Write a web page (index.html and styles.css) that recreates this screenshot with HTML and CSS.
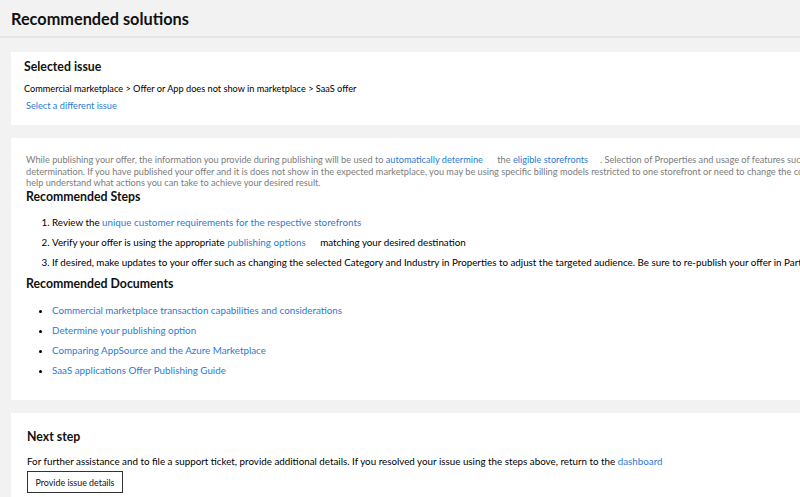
FILE: index.html
```html
<!DOCTYPE html>
<html>
<head>
<meta charset="utf-8">
<link rel="stylesheet" href="styles.css">
</head>
<body>
<div class="page">
  <header class="topbar">
    <h1 class="title">Recommended solutions</h1>
  </header>
  <main class="content">
    <section class="card card-issue">
      <h2 class="card-heading">Selected issue</h2>
      <div class="crumbs">Commercial marketplace &gt; Offer or App does not show in marketplace &gt; SaaS offer</div>
      <a class="link change-link" href="#">Select a different issue</a>
    </section>

    <section class="card card-steps">
      <p class="intro">While publishing your offer, the information you provide during publishing will be used to <a class="link" href="#">automatically determine</a><span class="ext"></span> the <a class="link" href="#">eligible storefronts</a><span class="ext"></span>. Selection of Properties and usage of features such as Test Drive can influence this storefront<br>determination. If you have published your offer and it is does not show in the expected marketplace, you may be using specific billing models restricted to one storefront or need to change the configuration of your offer. The steps below can<br>help understand what actions you can take to achieve your desired result.</p>
      <h2 class="section-heading">Recommended Steps</h2>
      <ol class="steps">
        <li>Review the <a class="link" href="#">unique customer requirements for the respective storefronts</a></li>
        <li>Verify your offer is using the appropriate <a class="link" href="#">publishing options</a><span class="ext"></span> matching your desired destination</li>
        <li>If desired, make updates to your offer such as changing the selected Category and Industry in Properties to adjust the targeted audience. Be sure to re-publish your offer in Partner Center.</li>
      </ol>
      <h2 class="section-heading">Recommended Documents</h2>
      <ul class="docs">
        <li><a class="link" href="#">Commercial marketplace transaction capabilities and considerations</a></li>
        <li><a class="link" href="#">Determine your publishing option</a></li>
        <li><a class="link" href="#">Comparing AppSource and the Azure Marketplace</a></li>
        <li><a class="link" href="#">SaaS applications Offer Publishing Guide</a></li>
      </ul>
    </section>

    <section class="card card-next">
      <h2 class="card-heading">Next step</h2>
      <p class="next-text">For further assistance and to file a support ticket, provide additional details. If you resolved your issue using the steps above, return to the <a class="link" href="#">dashboard</a></p>
      <button class="btn" type="button">Provide issue details</button>
    </section>
  </main>
</div>
</body>
</html>
```

FILE: styles.css
```css
html, body {
  margin: 0;
  padding: 0;
}
body {
  background: #f2f2f2;
  font-family: Lato, "Liberation Sans", Arial, sans-serif;
  color: #111;
  overflow: hidden;
  width: 800px;
  height: 497px;
}
.page {
  width: 1200px;
}
.topbar {
  height: 36px;
  border-bottom: 2px solid #e5e5e5;
  padding-left: 11px;
  display: flex;
  align-items: center;
}
.title {
  margin: 0;
  font-size: 16.3px;
  font-weight: 700;
  color: #111;
}
.content {
  padding: 14px 0 0 11px;
  display: flex;
  flex-direction: column;
  gap: 13px;
}
.card {
  background: #fff;
  width: 1100px;
  box-sizing: border-box;
}
.card-issue {
  height: 73px;
  padding: 7px 13px 0;
}
.card-heading {
  margin: 0;
  font-size: 12.3px;
  line-height: 16px;
  font-weight: 700;
  color: #111;
}
.crumbs {
  margin-top: 7px;
  font-size: 9.2px;
  line-height: 14px;
  color: #000;
}
.link {
  color: #2b7bd4;
  text-decoration: none;
}
.change-link {
  display: block;
  width: max-content;
  margin: 3px 0 0 2px;
  font-size: 9.2px;
  line-height: 14px;
}
.card-steps {
  height: 262px;
  padding: 16px 15px 0;
}
.intro {
  margin: 0;
  font-size: 9.2px;
  line-height: 11.5px;
  color: #7c7c7c;
  white-space: nowrap;
}
.ext {
  display: inline-block;
  width: 12px;
}
.section-heading {
  margin: 0;
  font-size: 12.3px;
  line-height: 16px;
  font-weight: 700;
  color: #111;
}
.steps, .docs {
  margin: 10px 0 7px;
  padding-left: 26px;
  font-size: 9.8px;
  line-height: 14px;
  color: #000;
  white-space: nowrap;
}
.steps li, .docs li {
  margin-bottom: 6px;
}
.docs {
  margin-top: 11px;
}
.card-next {
  height: 120px;
  padding: 16px 16px 0;
}
.next-text {
  margin: 9px 0 3px;
  font-size: 9.8px;
  line-height: 14px;
  color: #000;
}
.btn {
  display: block;
  width: 96px;
  height: 22px;
  border: 1.5px solid #333;
  background: #fff;
  font-family: inherit;
  font-size: 8.9px;
  color: #111;
  padding: 0;
}
```
